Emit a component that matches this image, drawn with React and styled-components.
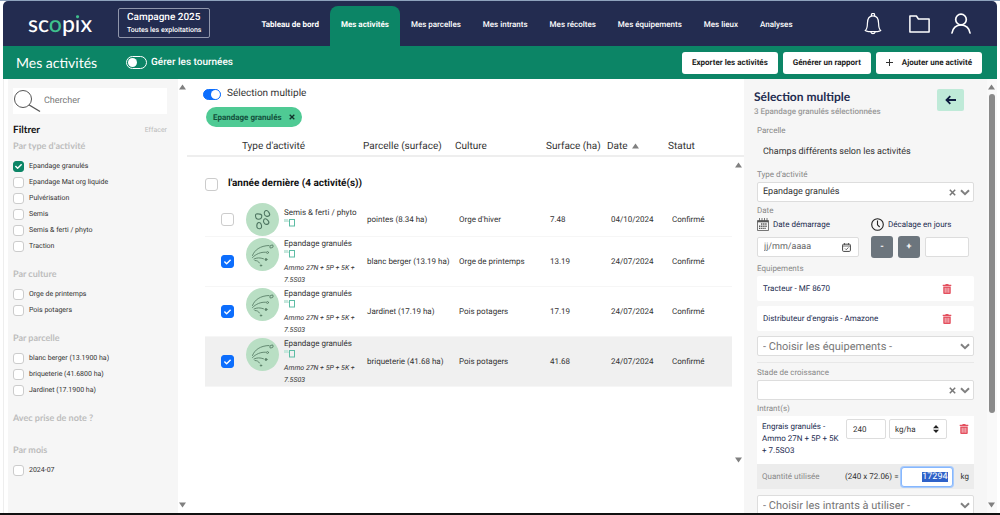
import React, { useEffect, useRef, useState } from "react";
import styled, { createGlobalStyle } from "styled-components";
import { FaCheck, FaTrashAlt } from "react-icons/fa";

const navItems = [
  "Tableau de bord",
  "Mes activités",
  "Mes parcelles",
  "Mes intrants",
  "Mes récoltes",
  "Mes équipements",
  "Mes lieux",
  "Analyses",
];

const filters = [
  {
    title: "Par type d'activité",
    options: [
      "Epandage granulés",
      "Epandage Mat org liquide",
      "Pulvérisation",
      "Semis",
      "Semis & ferti / phyto",
      "Traction",
    ],
  },
  { title: "Par culture", options: ["Orge de printemps", "Pois potagers"] },
  {
    title: "Par parcelle",
    options: ["blanc berger (13.1900 ha)", "briqueterie (41.6800 ha)", "Jardinet (17.1900 ha)"],
  },
  { title: "Avec prise de note ?", options: [] },
  { title: "Par mois", options: ["2024-07"] },
];

const product = "Ammo 27N + 5P + 5K + 7.5S03";

const activities = [
  { id: 1, type: "Semis & ferti / phyto", parcel: "pointes (8.34 ha)", crop: "Orge d'hiver", area: "7.48", date: "04/10/2024" },
  { id: 2, type: "Epandage granulés", product, parcel: "blanc berger (13.19 ha)", crop: "Orge de printemps", area: "13.19", date: "24/07/2024" },
  { id: 3, type: "Epandage granulés", product, parcel: "Jardinet (17.19 ha)", crop: "Pois potagers", area: "17.19", date: "24/07/2024" },
  { id: 4, type: "Epandage granulés", product, parcel: "briqueterie (41.68 ha)", crop: "Pois potagers", area: "41.68", date: "24/07/2024" },
];

const BellIcon = () => (
  <svg width="24" height="22" viewBox="0 0 24 22" fill="none" stroke="#fff" strokeWidth="1.2" strokeLinejoin="round">
    <path d="M7.4 2.8V1.9a1.6 1.6 0 0 1 3.2 0v.9M1.2 17.6c1.7-1.6 2.2-3.3 2.2-7.2 0-4.6 2.2-7.6 5.6-7.6s5.6 3 5.6 7.6c0 3.9.5 5.6 2.2 7.2-.9.6-2 .9-3.2 1H4.4c-1.2-.1-2.3-.4-3.2-1z" />
    <path d="M6.8 18.8c.3 1.2 1.1 1.9 2.2 1.9s1.9-.7 2.2-1.9" />
  </svg>
);

const FolderIcon = () => (
  <svg width="21" height="18" viewBox="0 0 21 18" fill="none" stroke="#fff" strokeWidth="1.5" strokeLinejoin="round">
    <path d="M.9 17V1h6.5l2 3h10.700v13z" />
  </svg>
);

const UserIcon = () => (
  <svg width="20" height="21" viewBox="0 0 20 21" fill="none" stroke="#fff" strokeWidth="1.7" strokeLinecap="round">
    <circle cx="10" cy="6.5" r="5.3" />
    <path d="M1 20c.6-4.800 4.200-8.200 9-8.200s8.400 3.400 9 8.200" />
  </svg>
);

const SearchIcon = () => (
  <svg width="28" height="24" viewBox="0 0 28 24" fill="none" stroke="#555" strokeWidth="1">
    <circle cx="10" cy="10" r="8.5" />
    <path d="M16.200 16L27 22.500" strokeWidth="1.4" />
  </svg>
);

const Chevron = () => (
  <svg width="10" height="7" viewBox="0 0 10 7" fill="none" stroke="#808080" strokeWidth="2">
    <path d="M1 1.200l4 4 4-4" />
  </svg>
);

const Cross = ({ size = 7, color = "#777", thick = 1.5 }) => (
  <svg width={size} height={size} viewBox="0 0 7 7" stroke={color} strokeWidth={thick}>
    <path d="M.8.8l5.400 5.400M6.200.8L.8 6.200" />
  </svg>
);

const BackIcon = () => (
  <svg width="12" height="10" viewBox="0 0 12 10" fill="none" stroke="#0f1c3f" strokeWidth="1.8">
    <path d="M11 5H1.500M5.300 1.200L1.500 5l3.800 3.800" />
  </svg>
);

const CalendarIcon = () => (
  <svg width="12" height="13" viewBox="0 0 12 13" fill="none" stroke="#555">
    <path d="M.5 2.500h11v10H.5z" strokeWidth=".8" />
    <path d="M.5 3.500h11" strokeWidth="1.6" />
    <path d="M2.500 0v4M5 0v4M7.500 0v4M10 0v4" strokeWidth=".8" />
    <path d="M4 6h6M2 8.200h8M2 10.400h7" strokeWidth="1.4" strokeDasharray="1.4 .7" />
  </svg>
);

const PickerIcon = () => (
  <svg width="9" height="9" viewBox="0 0 9 9" fill="none" stroke="#444">
    <rect x=".6" y="1.2" width="7.8" height="7.2" rx="1" />
    <path d="M.6 3h7.800M2.500 0v1.800M6.500 0v1.800M3 5.500l1.200 1.200L6.500 4.500" strokeWidth=".8" />
  </svg>
);

const ClockIcon = () => (
  <svg width="13" height="13" viewBox="0 0 13 13" fill="none" stroke="#222" strokeWidth="1.1">
    <circle cx="6.5" cy="6.5" r="5.8" />
    <path d="M6.500 2.500v4.300l2.200 2.200" />
  </svg>
);

const SeedIcon = () => (
  <svg width="33" height="33" viewBox="0 0 33 33" fill="none" stroke="#4e7561" strokeWidth="1.1">
    <circle cx="16.5" cy="16.5" r="16.5" fill="#b9dfc4" stroke="none" />
    <path d="M9.500 12.500c0-1.500 1.200-1.800 3-1.600 1.800.1 3.300.7 3.300 1.900 0 1.900-1.300 3.400-3.300 3.400s-3-1.700-3-3.700z" />
    <path d="M18.700 8.500c1-1.600 2.600-1.300 3.800.3 1.200 1.500 1.700 3 .6 4-1.300 1-3.500.7-4.400-.8-.7-1.200-.6-2.500 0-3.500z" />
    <path d="M12.600 19.500c1.400-.4 2.600 1.200 2.900 3 .3 1.900-.3 3-1.800 3.200-1.700.2-2.900-1-2.900-2.800 0-1.600.7-3.100 1.800-3.400z" />
    <path d="M17.700 17c.6-1.500 2-1.500 3.400-.4 1.500 1.200 2.300 2.500 1.500 3.800-.8 1.200-2.700 1.400-4 .2-1.100-1-1.400-2.400-.9-3.600z" />
  </svg>
);

const SpreadIcon = () => (
  <svg width="33" height="33" viewBox="0 0 33 33" fill="none" stroke="#5a8069" strokeWidth=".9" strokeLinecap="round">
    <circle cx="16.5" cy="16.5" r="16.5" fill="#b9dfc4" stroke="none" />
    <path d="M6.500 17.500C8.500 12 14 7.800 23 7.500" />
    <path d="M6.500 19.500c3.500-3.500 8-5.500 13-5.300" />
    <path d="M8 21c3-1.500 6-1.500 9.500-.2" />
    <path d="M9 22.500c2 0 3.500.8 4.500 2.500" />
    <ellipse cx="25.5" cy="8.5" rx="1.8" ry="1.2" transform="rotate(-30 25.5 8.5)" />
    <circle cx="21.5" cy="14.5" r="1" />
    <circle cx="20" cy="21.5" r="1" fill="#5a8069" />
    <circle cx="15" cy="27.5" r=".7" fill="#5a8069" />
  </svg>
);

const Marker = () => (
  <svg width="12" height="8" viewBox="0 0 12 8">
    <path d="M0 0h4l1 3H0z" fill="#c5e7dc" />
    <rect x="5.500" y=".5" width="5" height="6.500" fill="none" stroke="#5cbca4" />
  </svg>
);

const Arrow = ({ down }) => (
  <svg width="7" height="6" viewBox="0 0 7 6" fill="#808080">
    <path d={down ? "M0 .5h7L3.500 5.500z" : "M0 5.500h7L3.500.5z"} />
  </svg>
);

function Scrollbar({ thumb = 0 }) {
  return (
    <Bar>
      <Arrow />
      <Track>{thumb > 0 && <Thumb style={{ height: `${thumb}%` }} />}</Track>
      <Arrow down />
    </Bar>
  );
}

function Check({ label, color, size, ...rest }) {
  return (
    <CheckBox $size={size} $color={color}>
      <input type="checkbox" aria-label={label} {...rest} />
      <FaCheck />
    </CheckBox>
  );
}

function Select({ id, options, clearable }) {
  return (
    <SelectBox>
      <select id={id}>
        {options.map((o) => (
          <option key={o}>{o}</option>
        ))}
      </select>
      {clearable && (
        <IconButton aria-label="Effacer le choix">
          <Cross />
        </IconButton>
      )}
      <Chevron />
    </SelectBox>
  );
}

function App() {
  const [checkedFilters, setCheckedFilters] = useState(["Epandage granulés"]);
  const [selected, setSelected] = useState([2, 3, 4]);
  const quantity = useRef(null);

  useEffect(() => {
    quantity.current.focus();
    quantity.current.select();
  }, []);

  const toggle = (list, setList, value) =>
    setList(list.includes(value) ? list.filter((v) => v !== value) : [...list, value]);

  return (
    <Page>
      <GlobalStyle />
      <Header>
        <Logo href="#">
          sc<em>o</em>p<i>i</i>x
        </Logo>
        <Campaign>
          <strong>Campagne 2025</strong>
          <span>Toutes les exploitations</span>
        </Campaign>
        <Nav>
          {navItems.map((item, i) => (
            <NavLink key={item} href="#" $active={item === "Mes activités"} $bold={i < 2}>
              {item}
            </NavLink>
          ))}
        </Nav>
        <HeaderIcons>
          <IconButton aria-label="Notifications"><BellIcon /></IconButton>
          <IconButton aria-label="Documents"><FolderIcon /></IconButton>
          <IconButton aria-label="Mon compte"><UserIcon /></IconButton>
        </HeaderIcons>
      </Header>

      <SubHeader>
        <h1>Mes activités</h1>
        <Switch $outline>
          <input type="checkbox" />
          Gérer les tournées
        </Switch>
        <Actions>
          <Action>Exporter les activités</Action>
          <Action>Générer un rapport</Action>
          <Action>
            <svg width="7" height="7" viewBox="0 0 7 7" stroke="#333"><path d="M3.500 0v7M0 3.500h7" /></svg>
            Ajouter une activité
          </Action>
        </Actions>
      </SubHeader>

      <Body>
        <Sidebar>
          <SearchBox>
            <SearchIcon />
            <input type="text" placeholder="Chercher" aria-label="Chercher" />
          </SearchBox>
          <FilterHead>
            <h2>Filtrer</h2>
            <button>Effacer</button>
          </FilterHead>
          {filters.map((group) => (
            <FilterGroup key={group.title}>
              <legend>{group.title}</legend>
              {group.options.map((option) => (
                <FilterOption key={option}>
                  <Check
                    size={11}
                    color="#0c8566"
                    checked={checkedFilters.includes(option)}
                    onChange={() => toggle(checkedFilters, setCheckedFilters, option)}
                  />
                  {option}
                </FilterOption>
              ))}
            </FilterGroup>
          ))}
        </Sidebar>
        <Scrollbar />

        <Main>
          <Tools>
            <Switch>
              <input type="checkbox" defaultChecked />
              Sélection multiple
            </Switch>
            <Chip>
              Epandage granulés
              <Cross size={6} color="#12302a" />
            </Chip>
          </Tools>
          <List>
            <Table>
              <thead>
                <HeadRow>
                  <th aria-label="Sélection" />
                  <th>Type d'activité</th>
                  <th>Parcelle (surface)</th>
                  <th>Culture</th>
                  <th>Surface (ha)</th>
                  <th>Date <Arrow /></th>
                  <th>Statut</th>
                </HeadRow>
              </thead>
              <tbody>
                <GroupRow>
                  <td>
                    <label>
                      <Check size={13} color="#0d6efd" />
                      l'année dernière (4 activité(s))
                    </label>
                  </td>
                </GroupRow>
                {activities.map((a) => (
                  <Row key={a.id} $highlight={a.id === 4} $tall={a.product}>
                    <CheckCell>
                      <Check
                        size={13}
                        color="#0d6efd"
                        label={a.type}
                        checked={selected.includes(a.id)}
                        onChange={() => toggle(selected, setSelected, a.id)}
                      />
                    </CheckCell>
                    <TypeCell>
                      {a.product ? <SpreadIcon /> : <SeedIcon />}
                      <TypeText>
                        <span>{a.type}</span>
                        <div><Marker /></div>
                        {a.product && <i>{a.product}</i>}
                      </TypeText>
                    </TypeCell>
                    <td>{a.parcel}</td>
                    <td>{a.crop}</td>
                    <td>{a.area}</td>
                    <td>{a.date}</td>
                    <td>Confirmé</td>
                  </Row>
                ))}
              </tbody>
            </Table>
            <ListSide>
              <HeadFiller />
              <Scrollbar />
            </ListSide>
          </List>
        </Main>

        <Panel>
          <PanelHead>
            <div>
              <h2>Sélection multiple</h2>
              <p>3 Epandage granulés sélectionnées</p>
            </div>
            <BackButton aria-label="Retour"><BackIcon /></BackButton>
          </PanelHead>
          <Form>
            <Label as="span">Parcelle</Label>
            <Parcel>Champs différents selon les activités</Parcel>

            <Label htmlFor="type">Type d'activité</Label>
            <Select id="type" options={["Epandage granulés"]} clearable />

            <Label as="span">Date</Label>
            <DateGrid>
              <IconLabel htmlFor="start"><CalendarIcon />Date démarrage</IconLabel>
              <IconLabel htmlFor="shift"><ClockIcon />Décalage en jours</IconLabel>
              <DateBox>
                <input id="start" type="text" placeholder="jj/mm/aaaa" />
                <IconButton aria-label="Ouvrir le calendrier"><PickerIcon /></IconButton>
              </DateBox>
              <Shift>
                <StepButton>-</StepButton>
                <StepButton>+</StepButton>
                <TextInput id="shift" type="text" $width={44} />
              </Shift>
            </DateGrid>

            <Label htmlFor="equipment">Equipements</Label>
            <Cards>
              {["Tracteur - MF 8670", "Distributeur d'engrais - Amazone"].map((name) => (
                <Card key={name}>
                  {name}
                  <DeleteButton aria-label={`Supprimer ${name}`}><FaTrashAlt /></DeleteButton>
                </Card>
              ))}
              <LargeSelect>
                <Select id="equipment" options={["- Choisir les équipements -"]} />
              </LargeSelect>
            </Cards>
            <Divider />

            <Label htmlFor="stage">Stade de croissance</Label>
            <Select id="stage" options={[""]} clearable />

            <Label htmlFor="inputs">Intrant(s)</Label>
            <InputCard>
              <p>Engrais granulés - Ammo 27N + 5P + 5K + 7.5SO3</p>
              <TextInput type="text" defaultValue="240" aria-label="Dose" $width={40} />
              <UnitBox>
                <select aria-label="Unité">
                  <option>kg/ha</option>
                </select>
                <svg width="6" height="8" viewBox="0 0 6 8" fill="#222"><path d="M0 3.200h6L3 0zM0 4.800h6L3 8z" /></svg>
              </UnitBox>
              <DeleteButton aria-label="Supprimer l'intrant"><FaTrashAlt /></DeleteButton>
            </InputCard>
            <Quantity>
              <label htmlFor="quantity">Quantité utilisée</label>
              <span>(240 x 72.06) =</span>
              <QuantityInput ref={quantity} id="quantity" type="text" defaultValue="17294" />
              <span>kg</span>
            </Quantity>
            <LargeSelect>
              <Select id="inputs" options={["- Choisir les intrants à utiliser -"]} />
            </LargeSelect>
          </Form>
        </Panel>
        <PanelScroll>
          <Scrollbar thumb={79} />
        </PanelScroll>
      </Body>
    </Page>
  );
}

const GlobalStyle = createGlobalStyle`
  * {
    box-sizing: border-box;
    margin: 0;
    padding: 0;
  }
  body {
    font-family: Roboto, sans-serif;
    font-size: 8px;
    color: #333;
    background: #fff;
    text-rendering: geometricPrecision;
  }
  button, input, select {
    font: inherit;
    color: inherit;
    background: none;
    border: none;
    outline: none;
    text-rendering: inherit;
  }
  a {
    text-decoration: none;
    color: inherit;
  }
  svg {
    display: block;
    flex-shrink: 0;
  }
`;

const Page = styled.div`
  height: 100vh;
  display: flex;
  flex-direction: column;
  padding: 0 3px;
  overflow: hidden;
  border-top: 1px solid #8fa3bd;
  border-bottom: 2px solid #111;
`;

const Header = styled.header`
  display: flex;
  flex-shrink: 0;
  height: 45px;
  padding: 0 26px 0 25px;
  color: #fff;
  background: #232c50;
  border-radius: 5px 5px 0 0;
`;

const Logo = styled.a`
  width: 90px;
  padding-top: 7px;
  font-family: Lato, sans-serif;
  font-size: 23px;
  font-weight: 500;
  line-height: 30px;
  em {
    font-style: normal;
    color: #3fc08d;
  }
  i {
    font-style: normal;
    color: transparent;
    background: linear-gradient(#3fc08d 11px, #fff 11px);
    background-clip: text;
  }
`;

const Campaign = styled.button`
  height: 30px;
  margin-top: 7px;
  padding: 0 8px;
  text-align: left;
  border: 1px solid #9096ab;
  border-radius: 2px;
  strong, span {
    display: block;
    font-size: 10px;
    font-weight: 500;
    line-height: 14px;
  }
  span {
    font-size: 7px;
    line-height: 10px;
  }
`;

const Nav = styled.nav`
  display: flex;
  flex: 1;
  margin-left: 40px;
`;

const NavLink = styled.a`
  height: 40px;
  margin-top: 5px;
  padding: 0 11px;
  font-weight: ${(p) => (p.$bold ? 700 : 500)};
  line-height: 38px;
  white-space: nowrap;
  border-radius: 8px 8px 0 0;
  background: ${(p) => (p.$active ? "#0c8566" : "none")};
`;

const HeaderIcons = styled.div`
  display: flex;
  align-items: center;
  gap: 21px;
`;

const IconButton = styled.button`
  cursor: pointer;
`;

const SubHeader = styled.div`
  display: flex;
  flex-shrink: 0;
  align-items: center;
  height: 33px;
  padding: 0 15px 0 13px;
  color: #fff;
  background: #0c8566;
  h1 {
    width: 110px;
    font-family: Lato, sans-serif;
    font-size: 14px;
    font-weight: 400;
  }
`;

const Switch = styled.label`
  display: flex;
  align-items: center;
  gap: ${(p) => (p.$outline ? 4 : 6)}px;
  font-size: 10px;
  font-weight: ${(p) => (p.$outline ? 500 : 400)};
  line-height: 14px;
  input {
    display: flex;
    align-items: center;
    appearance: none;
    width: ${(p) => (p.$outline ? 21 : 18)}px;
    height: ${(p) => (p.$outline ? 13 : 11)}px;
    padding: ${(p) => (p.$outline ? 1 : 0)}px;
    border: 1px solid ${(p) => (p.$outline ? "#fff" : "#0d6efd")};
    border-radius: 7px;
  }
  input::before {
    content: "";
    width: 9px;
    height: 9px;
    border-radius: 50%;
    background: #fff;
  }
  input:checked {
    justify-content: flex-end;
    background: #0d6efd;
  }
`;

const Actions = styled.div`
  display: flex;
  gap: 5px;
  margin-left: auto;
`;

const Action = styled.button`
  display: flex;
  align-items: center;
  gap: 9px;
  height: 22px;
  padding: 0 10px;
  font-weight: 700;
  color: #222;
  background: #fff;
  border-radius: 3px;
`;

const Body = styled.div`
  display: flex;
  flex: 1;
  min-height: 0;
  border-left: 1px solid #eee;
`;

const Bar = styled.div`
  display: flex;
  flex-direction: column;
  align-items: center;
  flex: 0 0 9px;
  padding: 5px 0;
`;

const Track = styled.div`
  flex: 1;
  width: 6px;
  padding: 4px 0;
`;

const Thumb = styled.div`
  border-radius: 3px;
  background: #8a8a8a;
`;

const Sidebar = styled.aside`
  flex: 0 0 170px;
  margin-left: 4px;
  padding: 9px 11px 0 5px;
  background: #f6f6f6;
`;

const SearchBox = styled.div`
  display: flex;
  align-items: center;
  gap: 3px;
  height: 26px;
  background: #fff;
  input {
    width: 100%;
    font-size: 9px;
  }
  input::placeholder {
    color: #777;
  }
`;

const FilterHead = styled.div`
  display: flex;
  align-items: center;
  justify-content: space-between;
  height: 14px;
  margin: 9px 0 2px;
  h2 {
    font-family: Lato, sans-serif;
    font-size: 10px;
    font-weight: 700;
    color: #111;
  }
  button {
    font-size: 7px;
    color: #bbb;
  }
`;

const FilterGroup = styled.fieldset`
  margin-bottom: 13px;
  border: none;
  legend {
    margin-bottom: 5px;
    font-family: Lato, sans-serif;
    font-size: 9px;
    font-weight: 700;
    line-height: 14px;
    color: #bdbdbd;
  }
`;

const FilterOption = styled.label`
  display: flex;
  align-items: center;
  gap: 5px;
  height: 16px;
  font-size: 7px;
`;

const CheckBox = styled.span`
  display: grid;
  width: ${(p) => p.$size}px;
  height: ${(p) => p.$size}px;
  input, svg {
    grid-area: 1 / 1;
  }
  input {
    appearance: none;
    border: 1px solid #ccc;
    border-radius: 3px;
    background: #fff;
  }
  input:checked {
    border-color: ${(p) => p.$color};
    background: ${(p) => p.$color};
  }
  svg {
    place-self: center;
    width: 7px;
    color: #fff;
    pointer-events: none;
  }
`;

const Main = styled.main`
  display: flex;
  flex-direction: column;
  flex: 1;
  min-width: 0;
  padding-bottom: 45px;
`;

const Tools = styled.div`
  display: flex;
  flex-direction: column;
  align-items: flex-start;
  gap: 6px;
  padding: 8px 16px;
`;

const Chip = styled.button`
  display: flex;
  align-items: center;
  gap: 7px;
  height: 20px;
  margin-left: 3px;
  padding: 0 7px;
  font-weight: 700;
  color: #12503c;
  border-radius: 10px;
  background: #4fca94;
`;

const List = styled.div`
  display: flex;
  flex: 1;
  min-height: 0;
`;

const Table = styled.table`
  display: block;
  flex: 1;
  min-width: 0;
  thead, tbody {
    display: block;
  }
`;

const HeadRow = styled.tr`
  display: grid;
  grid-template-columns: 37px 121fr 92fr 91fr 61fr 61fr 64fr;
  height: 22px;
  padding-left: 18px;
  border-bottom: 2px solid #eee;
  th {
    display: flex;
    align-items: center;
    gap: 4px;
    padding-top: 2px;
    font-size: 10px;
    font-weight: 400;
    white-space: nowrap;
  }
`;

const GroupRow = styled.tr`
  display: block;
  height: 45px;
  padding: 20px 0 0 18px;
  td {
    display: block;
  }
  label {
    display: flex;
    align-items: center;
    gap: 10px;
    font-size: 10px;
    font-weight: 700;
    line-height: 14px;
    color: #111;
  }
`;

const Row = styled.tr`
  display: grid;
  grid-template-columns: 37px 121fr 92fr 91fr 61fr 61fr 64fr;
  height: ${(p) => (p.$tall ? 50 : 35)}px;
  margin-left: 18px;
  border-bottom: 1px solid #f6f6f6;
  background: ${(p) => (p.$highlight ? "#f0f0f0" : "none")};
  td {
    display: flex;
    align-items: center;
    padding-left: 4px;
    white-space: nowrap;
  }
`;

const CheckCell = styled.td`
  && {
    padding-left: 16px;
  }
`;

const TypeCell = styled.td`
  gap: 5px;
  > svg {
    align-self: flex-start;
    margin-top: 1px;
  }
`;

const TypeText = styled.div`
  line-height: 12px;
  white-space: normal;
  span, i {
    display: block;
  }
  div {
    height: 12px;
  }
  i {
    font-size: 7px;
  }
`;

const ListSide = styled.div`
  display: flex;
  flex-direction: column;
  flex: 0 0 12px;
  > :last-child {
    flex: 1;
  }
`;

const HeadFiller = styled.div`
  flex: 0 0 22px;
  border-bottom: 2px solid #eee;
`;

const Panel = styled.section`
  flex: 0 0 243px;
  overflow: hidden;
  padding: 10px 13px 0 10px;
  background: #f6f6f6;
`;

const PanelScroll = styled.div`
  display: flex;
  flex: 0 0 10px;
  background: #f9f9f9;
`;

const PanelHead = styled.div`
  display: flex;
  align-items: flex-start;
  justify-content: space-between;
  padding-right: 10px;
  h2 {
    font-family: Lato, sans-serif;
    font-size: 12px;
    font-weight: 700;
    line-height: 16px;
    color: #232c50;
  }
  p {
    font-weight: 500;
    line-height: 14px;
    color: #999;
  }
`;

const BackButton = styled.button`
  display: grid;
  place-items: center;
  width: 27px;
  height: 22px;
  border-radius: 2px;
  background: #bfead8;
`;

const Form = styled.div`
  margin: 5px 0 0 3px;
`;

const Label = styled.label`
  display: block;
  line-height: 14px;
  color: #888;
`;

const Parcel = styled.p`
  padding: 7px 6px 6px;
  margin-bottom: 3px;
  font-size: 9px;
  line-height: 14px;
`;

const SelectBox = styled.div`
  display: flex;
  align-items: center;
  gap: 4px;
  height: 20px;
  margin-bottom: 2px;
  padding: 0 3px 0 5px;
  font-size: 9px;
  border: 1px solid #ddd;
  border-radius: 2px;
  background: #fff;
  select {
    flex: 1;
    min-width: 0;
    appearance: none;
  }
`;

const LargeSelect = styled.div`
  select {
    font-size: 11px;
    color: #777;
  }
`;

const DateGrid = styled.div`
  display: grid;
  grid-template-columns: 102px 1fr;
  column-gap: 12px;
  row-gap: 5px;
  align-items: center;
  margin-bottom: 4px;
`;

const IconLabel = styled.label`
  display: flex;
  align-items: center;
  gap: 4px;
  height: 13px;
  color: #232c50;
`;

const DateBox = styled.div`
  display: flex;
  align-items: center;
  height: 20px;
  padding: 0 7px 0 6px;
  font-size: 9px;
  border: 1px solid #ddd;
  border-radius: 2px;
  background: #fff;
  input {
    flex: 1;
    min-width: 0;
  }
  input::placeholder {
    color: #666;
  }
`;

const Shift = styled.div`
  display: flex;
  align-items: center;
  gap: 5px;
`;

const StepButton = styled.button`
  width: 22px;
  height: 22px;
  font-size: 9px;
  font-weight: 700;
  color: #fff;
  border-radius: 3px;
  background: #6c757d;
`;

const TextInput = styled.input`
  width: ${(p) => p.$width}px;
  height: 20px;
  padding: 0 6px;
  border: 1px solid #ddd;
  border-radius: 2px;
  background: #fff;
`;

const Cards = styled.div`
  display: flex;
  flex-direction: column;
  gap: 5px;
`;

const Card = styled.div`
  display: flex;
  align-items: center;
  justify-content: space-between;
  height: 25px;
  padding: 0 22px 0 6px;
  color: #232c50;
  border-radius: 2px;
  background: #fff;
`;

const DeleteButton = styled.button`
  font-size: 10px;
  color: #e4505f;
`;

const Divider = styled.hr`
  margin: 4px 0 3px;
  border: none;
  border-top: 1px solid #e8e8e8;
`;

const InputCard = styled.div`
  display: flex;
  align-items: flex-start;
  gap: 3px;
  height: 48px;
  padding: 3px 5px;
  background: #fff;
  p {
    flex: 1;
    line-height: 12px;
    padding-top: 2px;
    color: #232c50;
  }
  ${DeleteButton} {
    padding: 5px 0 0 9px;
  }
`;

const UnitBox = styled.div`
  display: flex;
  align-items: center;
  width: 58px;
  height: 20px;
  padding: 0 7px 0 5px;
  border: 1px solid #ddd;
  border-radius: 2px;
  select {
    flex: 1;
    min-width: 0;
    font-size: 8px;
    appearance: none;
  }
`;

const Quantity = styled.div`
  display: flex;
  align-items: center;
  height: 25px;
  margin-bottom: 6px;
  padding: 0 5px;
  background: #ececec;
  label {
    flex: 1;
    color: #888;
  }
`;

const QuantityInput = styled.input`
  width: 52px;
  height: 20px;
  margin: 0 8px 0 2px;
  padding: 0 4px;
  font-size: 9px;
  text-align: right;
  border: 1px solid #86b7fe;
  border-radius: 3px;
  background: #fff;
  box-shadow: 0 0 0 1px #a9cbfb;
  &::selection {
    color: #fff;
    background: #2f62c9;
  }
`;

export default App;
